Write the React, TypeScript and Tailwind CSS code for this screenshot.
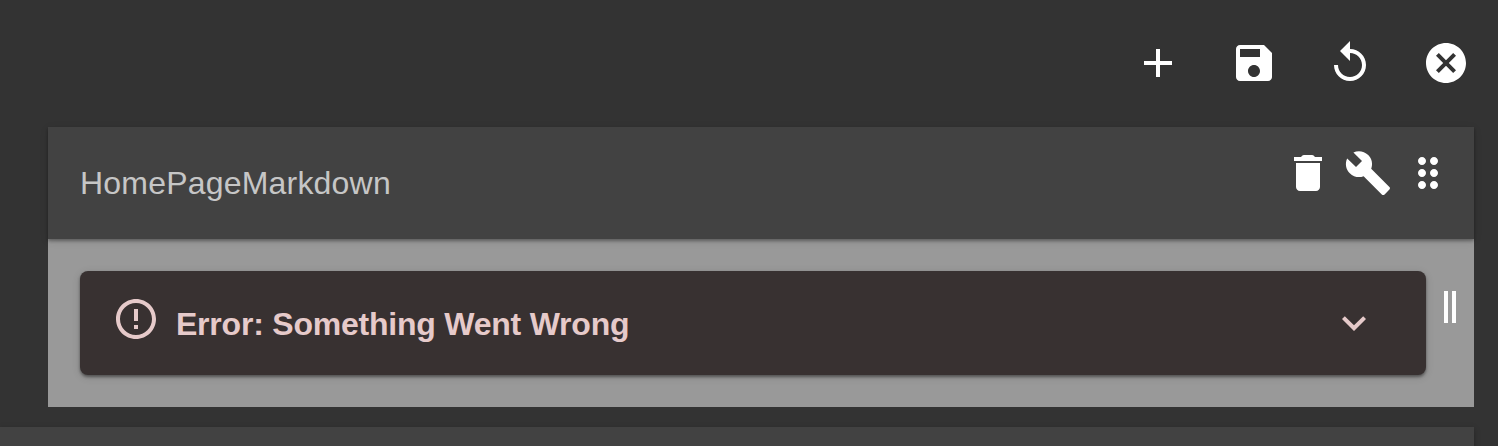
import React from "react";

function Icon({ d, className = "" }: { d: string; className?: string }) {
  return (
    <svg viewBox="0 0 24 24" className={"block size-12 shrink-0 " + className} fill="currentColor" aria-hidden="true">
      <path d={d} />
    </svg>
  );
}

const icons = {
  add: "M19 13h-6v6h-2v-6H5v-2h6V5h2v6h6v2z",
  save: "M17 3H5c-1.11 0-2 .9-2 2v14c0 1.1.89 2 2 2h14c1.1 0 2-.9 2-2V7l-4-4zm-5 16c-1.66 0-3-1.34-3-3s1.34-3 3-3 3 1.34 3 3-1.34 3-3 3zm3-10H5V5h10v4z",
  replay: "M12 5V1L7 6l5 5V7c3.31 0 6 2.69 6 6s-2.69 6-6 6-6-2.69-6-6H4c0 4.42 3.58 8 8 8s8-3.58 8-8-3.58-8-8-8z",
  cancel: "M12 2C6.47 2 2 6.47 2 12s4.47 10 10 10 10-4.47 10-10S17.53 2 12 2zm5 13.59L15.59 17 12 13.41 8.41 17 7 15.59 10.59 12 7 8.41 8.41 7 12 10.59 15.59 7 17 8.41 13.41 12 17 15.59z",
  trash: "M6 19c0 1.1.9 2 2 2h8c1.1 0 2-.9 2-2V7H6v12zM19 4h-3.5l-.71-.71c-.18-.18-.44-.29-.7-.29H9.91c-.26 0-.52.11-.7.29L8.5 4H5v2h14V4z",
  build: "M22.7 19l-9.1-9.1c.9-2.3.4-5-1.5-6.9-2-2-5-2.4-7.4-1.3L9 6 6 9 1.6 4.7C.4 7.1.9 10.1 2.9 12.1c1.9 1.9 4.6 2.4 6.9 1.5l9.1 9.1c.4.4 1 .4 1.4 0l2.3-2.3c.5-.4.5-1.1.1-1.4z",
  drag: "M11 18c0 1.1-.9 2-2 2s-2-.9-2-2 .9-2 2-2 2 .9 2 2zm-2-8c-1.1 0-2 .9-2 2s.9 2 2 2 2-.9 2-2-.9-2-2-2zm0-6c-1.1 0-2 .9-2 2s.9 2 2 2 2-.9 2-2-.9-2-2-2zm6 4c1.1 0 2-.9 2-2s-.9-2-2-2-2 .9-2 2 .9 2 2 2zm0 2c-1.1 0-2 .9-2 2s.9 2 2 2 2-.9 2-2-.9-2-2-2zm0 6c-1.1 0-2 .9-2 2s.9 2 2 2 2-.9 2-2-.9-2-2-2z",
  error: "M11 15h2v2h-2zm0-8h2v6h-2zm.99-5C6.47 2 2 6.48 2 12s4.47 10 9.99 10C17.52 22 22 17.52 22 12S17.52 2 11.99 2zM12 20c-4.42 0-8-3.58-8-8s3.58-8 8-8 8 3.58 8 8-3.58 8-8 8z",
  expand: "M16.59 8.59L12 13.17 7.41 8.59 6 10l6 6 6-6z",
};

export default function App() {
  return (
    <div className="flex h-[446px] w-[1498px] flex-col overflow-hidden bg-[#333] font-['Liberation_Sans',Arial,sans-serif] text-white">
      <div className="flex h-[127px] shrink-0 justify-end gap-12 pt-[39px] pr-7">
        <Icon d={icons.add} />
        <Icon d={icons.save} />
        <Icon d={icons.replay} />
        <Icon d={icons.cancel} />
      </div>

      <section className="mr-6 ml-12 flex h-[280px] shrink-0 flex-col">
        <header className="z-10 flex h-28 shrink-0 items-start justify-between bg-[#424242] pr-[22px] pl-8 shadow-[0_2px_3px_rgba(0,0,0,0.32),0_2px_8px_rgba(0,0,0,0.12)]">
          <h2 className="pt-9 text-[32px] leading-10 tracking-[0.2px] text-[#c6c6c6]">HomePageMarkdown</h2>
          <div className="flex gap-3 pt-[22px]">
            <Icon d={icons.trash} />
            <Icon d={icons.build} />
            <Icon d={icons.drag} />
          </div>
        </header>
        <div className="flex h-42 bg-[#999] pt-8 pr-[18px] pl-8">
          <div className="flex h-26 w-[1346px] items-start rounded-lg bg-[#383131] pr-12 pl-8 text-[#e6caca] shadow-[0_2px_3px_rgba(0,0,0,0.4),0_2px_8px_rgba(0,0,0,0.14)]">
            <Icon d={icons.error} className="mt-6" />
            <h3 className="ml-4 grow pt-[33px] text-[32px] leading-10 font-bold tracking-[-0.22px]">
              Error: Something Went Wrong
            </h3>
            <Icon d={icons.expand} className="mt-7" />
          </div>
          <div className="mt-5 ml-[18px] flex h-8 gap-1">
            <span className="w-1 bg-white" />
            <span className="w-1 bg-white" />
          </div>
        </div>
      </section>

      <div className="mt-5 mr-6 h-10 shrink-0 bg-[#424242] shadow-[0_2px_6px_rgba(0,0,0,0.28)]" />
    </div>
  );
}
